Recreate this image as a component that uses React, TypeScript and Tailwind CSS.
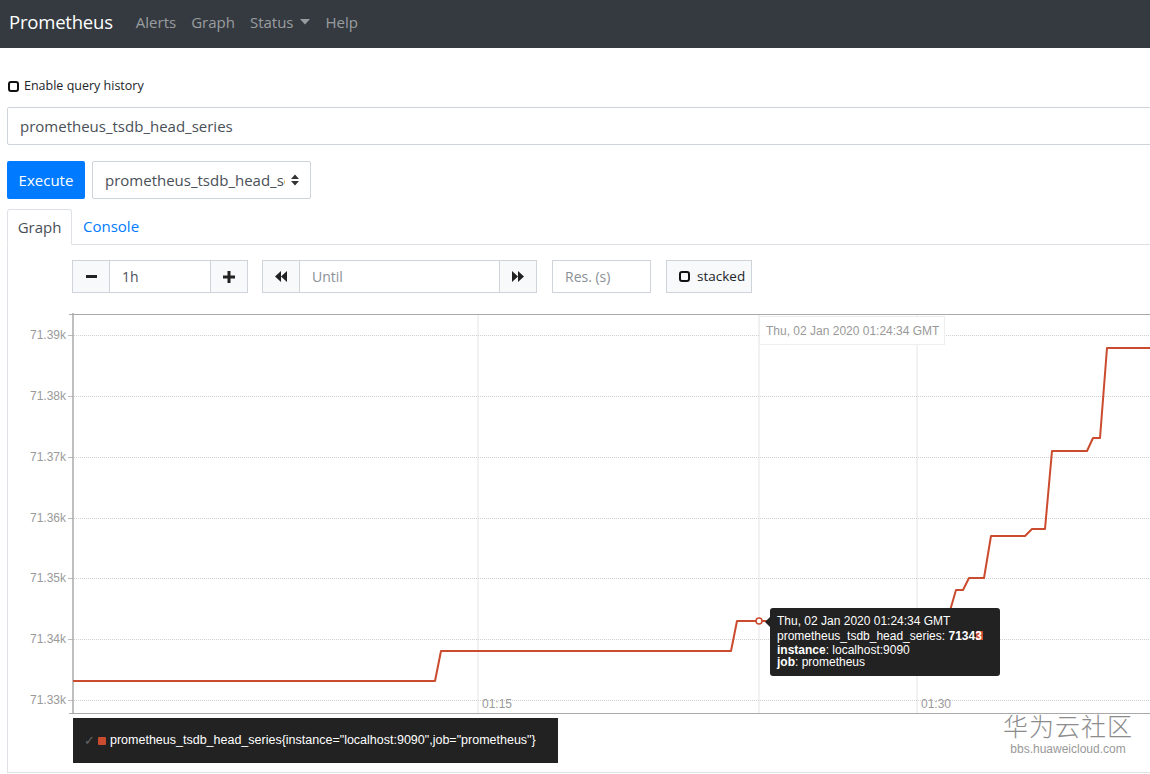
import React from 'react';

const yTicks = [
  { y: 335, label: '71.39k' },
  { y: 396, label: '71.38k' },
  { y: 457, label: '71.37k' },
  { y: 518, label: '71.36k' },
  { y: 578, label: '71.35k' },
  { y: 639, label: '71.34k' },
  { y: 700, label: '71.33k' },
];

const seriesPath =
  'M73,681 H435 L441,651 H731 L737,621 H947 L956,590 H963 L969,578 H984 L991,536 H1025 L1032,529 H1045 L1052,451 H1087 L1093,438 H1100 L1107,348 H1152';

function Chart() {
  return (
    <svg width="1142" height="423" viewBox="8 293 1142 423" className="block">
      {/* vertical grid */}
      {[478, 759, 917].map((x) => (
        <line key={x} x1={x} y1={314} x2={x} y2={713} stroke="#e4e4e4" strokeWidth="1" />
      ))}
      {/* horizontal grid */}
      {yTicks.map((t) => (
        <g key={t.y}>
          <line x1={74} y1={t.y + 0.5} x2={1150} y2={t.y + 0.5} stroke="#d0d0d0" strokeWidth="1" strokeDasharray="1 1" />
          <line x1={68} y1={t.y + 0.5} x2={73} y2={t.y + 0.5} stroke="#bbb" strokeWidth="1" />
          <text x={66} y={t.y + 4} textAnchor="end" fontSize="12" fill="#9a9a9a" fontFamily="'Liberation Sans', Arial, sans-serif">
            {t.label}
          </text>
        </g>
      ))}
      {/* axes */}
      <line x1={73} y1={314.5} x2={1150} y2={314.5} stroke="#aaa" strokeWidth="1" />
      <line x1={69} y1={314.5} x2={73} y2={314.5} stroke="#aaa" strokeWidth="1" />
      <line x1={73} y1={313} x2={73} y2={714} stroke="#aaa" strokeWidth="1.5" />
      <line x1={73} y1={713.5} x2={1150} y2={713.5} stroke="#aaa" strokeWidth="1" />
      <line x1={69} y1={713.5} x2={73} y2={713.5} stroke="#aaa" strokeWidth="1" />
      <text x={482} y={708} fontSize="12" fill="#9a9a9a" fontFamily="'Liberation Sans', Arial, sans-serif">01:15</text>
      <text x={921} y={708} fontSize="12" fill="#9a9a9a" fontFamily="'Liberation Sans', Arial, sans-serif">01:30</text>
      {/* series */}
      <path d={seriesPath} fill="none" stroke="#cb4b2f" strokeWidth="2" strokeLinejoin="round" />
      <circle cx={759} cy={621} r={3} fill="#fff" stroke="#cb4b2f" strokeWidth="1.5" />
    </svg>
  );
}

function ChevronPair({ dir }: { dir: 'left' | 'right' }) {
  return (
    <svg width="12" height="11" viewBox="0 0 12 11">
      {dir === 'left' ? (
        <path d="M6 0 L0 5.5 L6 11 Z M12 0 L6 5.5 L12 11 Z" fill="#222" />
      ) : (
        <path d="M0 0 L6 5.5 L0 11 Z M6 0 L12 5.5 L6 11 Z" fill="#222" />
      )}
    </svg>
  );
}

export default function App() {
  return (
    <div className="relative w-[1150px] h-[774px] overflow-hidden bg-white font-['Open_Sans',sans-serif] text-[#212529]">
      {/* Navbar */}
      <nav className="h-12 bg-[#343a40] flex items-center pl-[9px] pb-[4px]">
        <span className="text-[18.5px] text-white tracking-[-0.2px]">Prometheus</span>
        <div className="flex items-center ml-[23px] text-[15px] text-white/50">
          <span>Alerts</span>
          <span className="ml-[15px]">Graph</span>
          <span className="ml-[15px] flex items-center">
            Status
            <svg width="10" height="6" viewBox="0 0 10 6" className="ml-[6px]">
              <path d="M0 0 H10 L5 5.5 Z" fill="rgba(255,255,255,0.5)" />
            </svg>
          </span>
          <span className="ml-[16px]">Help</span>
        </div>
      </nav>

      <div className="pl-[7px]">
        {/* Query history */}
        <div className="mt-[29px] h-[18px] flex items-center">
          <span className="ml-[1px] w-[11px] h-[11px] border-2 border-[#111] rounded-[3px]" />
          <span className="ml-[5px] text-[12.5px] text-[#212529]">Enable query history</span>
        </div>

        {/* Expression input */}
        <div className="mt-[12px] h-[38px] w-[1170px] border border-[#ced4da] rounded-[2px] flex items-center pl-[12px] text-[15px] text-[#495057]">
          prometheus_tsdb_head_series
        </div>

        {/* Execute row */}
        <div className="mt-[16px] h-[38px] flex items-stretch">
          <button className="w-[78px] bg-[#007bff] text-white text-[15px] rounded-[2px]">Execute</button>
          <div className="ml-[7px] w-[219px] border border-[#ced4da] rounded-[2px] flex items-center pl-[12px] pr-[10px] text-[15px] text-[#495057]">
            <span className="w-[180px] overflow-hidden whitespace-nowrap">prometheus_tsdb_head_series</span>
            <svg width="8" height="12" viewBox="0 0 8 12" className="ml-[6px]">
              <path d="M0 5 L4 0.5 L8 5 Z M0 7 L4 11.5 L8 7 Z" fill="#333" />
            </svg>
          </div>
        </div>

        {/* Tabs */}
        <div className="mt-[10px] h-[36px] flex items-end border-b border-[#dee2e6] w-[1160px]">
          <div className="h-[36px] w-[65px] border border-[#dee2e6] border-b-white rounded-t-[3px] bg-white -mb-px flex items-center justify-center text-[15px] text-[#495057]">
            Graph
          </div>
          <div className="h-[36px] ml-[11px] flex items-center text-[15px] text-[#007bff]">Console</div>
        </div>

        {/* Tab content */}
        <div className="w-[1160px] h-[528px] border-l border-b border-[#dee2e6]">
          {/* Controls */}
          <div className="pt-[15px] pl-[64px] flex items-center h-[48px] text-[14px]">
            <div className="flex h-[33px]">
              <div className="w-[38px] bg-[#f8f9fa] border border-[#ced4da] flex items-center justify-center">
                <span className="w-[11px] h-[3px] bg-[#222]" />
              </div>
              <div className="w-[100px] border-y border-[#ced4da] flex items-center pl-[12px] text-[#495057]">1h</div>
              <div className="w-[38px] bg-[#f8f9fa] border border-[#ced4da] flex items-center justify-center">
                <svg width="12" height="12" viewBox="0 0 12 12">
                  <path d="M4.5 0 H7.5 V4.5 H12 V7.5 H7.5 V12 H4.5 V7.5 H0 V4.5 H4.5 Z" fill="#222" />
                </svg>
              </div>
            </div>
            <div className="flex h-[33px] ml-[14px]">
              <div className="w-[38px] bg-[#f8f9fa] border border-[#ced4da] flex items-center justify-center">
                <ChevronPair dir="left" />
              </div>
              <div className="w-[199px] border-y border-[#ced4da] flex items-center pl-[12px] text-[#8a9096]">Until</div>
              <div className="w-[38px] bg-[#f8f9fa] border border-[#ced4da] flex items-center justify-center">
                <ChevronPair dir="right" />
              </div>
            </div>
            <div className="ml-[15px] w-[99px] h-[33px] border border-[#ced4da] flex items-center pl-[12px] text-[#8a9096]">Res. (s)</div>
            <div className="ml-[15px] w-[86px] h-[33px] bg-[#f8f9fa] border border-[#ced4da] flex items-center pl-[12px] text-[#212529]">
              <span className="w-[11px] h-[11px] border-2 border-[#111] rounded-[3px]" />
              <span className="ml-[7px] text-[13.5px]">stacked</span>
            </div>
          </div>

          <Chart />

          {/* Legend */}
          <div className="mt-[2px] ml-[65px] w-[485px] h-[45px] bg-[#222] flex items-center pl-[11px] font-['Liberation_Sans',Arial,sans-serif] text-[12.5px] text-white">
            <span className="text-[#666] text-[13px]">✓</span>
            <span className="ml-[3px] w-[8px] h-[8px] bg-[#cb4b2f] rounded-[1px]" />
            <span className="ml-[4px]">prometheus_tsdb_head_series{'{'}instance="localhost:9090",job="prometheus"{'}'}</span>
          </div>
        </div>
      </div>

      {/* Top date label */}
      <div className="absolute left-[759px] top-[316px] w-[186px] h-[29px] bg-white/90 border border-[#eee] flex items-center pl-[6px] font-['Liberation_Sans',Arial,sans-serif] text-[12px] text-[#999]">
        Thu, 02 Jan 2020 01:24:34 GMT
      </div>

      {/* Hover tooltip */}
      <div className="absolute left-[770px] top-[608px] w-[230px] h-[68px] bg-[#222] rounded-[3px] pl-[7px] pt-[6px] font-['Liberation_Sans',Arial,sans-serif] text-[12px] text-white">
        <span className="absolute -left-[5px] top-[9px] w-0 h-0 border-y-[5px] border-y-transparent border-r-[5px] border-r-[#222]" />
        <div className="leading-[15px]">Thu, 02 Jan 2020 01:24:34 GMT</div>
        <div className="leading-[15px]">
          prometheus_tsdb_head_series: <b className="relative">7134<span className="relative"><span className="absolute left-[1px] top-[2px] w-[7px] h-[9px] bg-[#cb4b2f]" /><span className="relative">3</span></span></b>
        </div>
        <div className="leading-[12px]"><b>instance</b>: localhost:9090</div>
        <div className="leading-[12px]"><b>job</b>: prometheus</div>
      </div>

      {/* Watermark */}
      <div className="absolute left-[1003px] top-[711px] flex flex-col items-center text-[#8c8c8c]">
        <span className="text-[25px] leading-[28px] tracking-[1px] font-['Noto_Sans_CJK_SC',sans-serif] font-light">华为云社区</span>
        <span className="mt-[1px] text-[12px] font-['Liberation_Sans',Arial,sans-serif] text-[#999]">bbs.huaweicloud.com</span>
      </div>
    </div>
  );
}
